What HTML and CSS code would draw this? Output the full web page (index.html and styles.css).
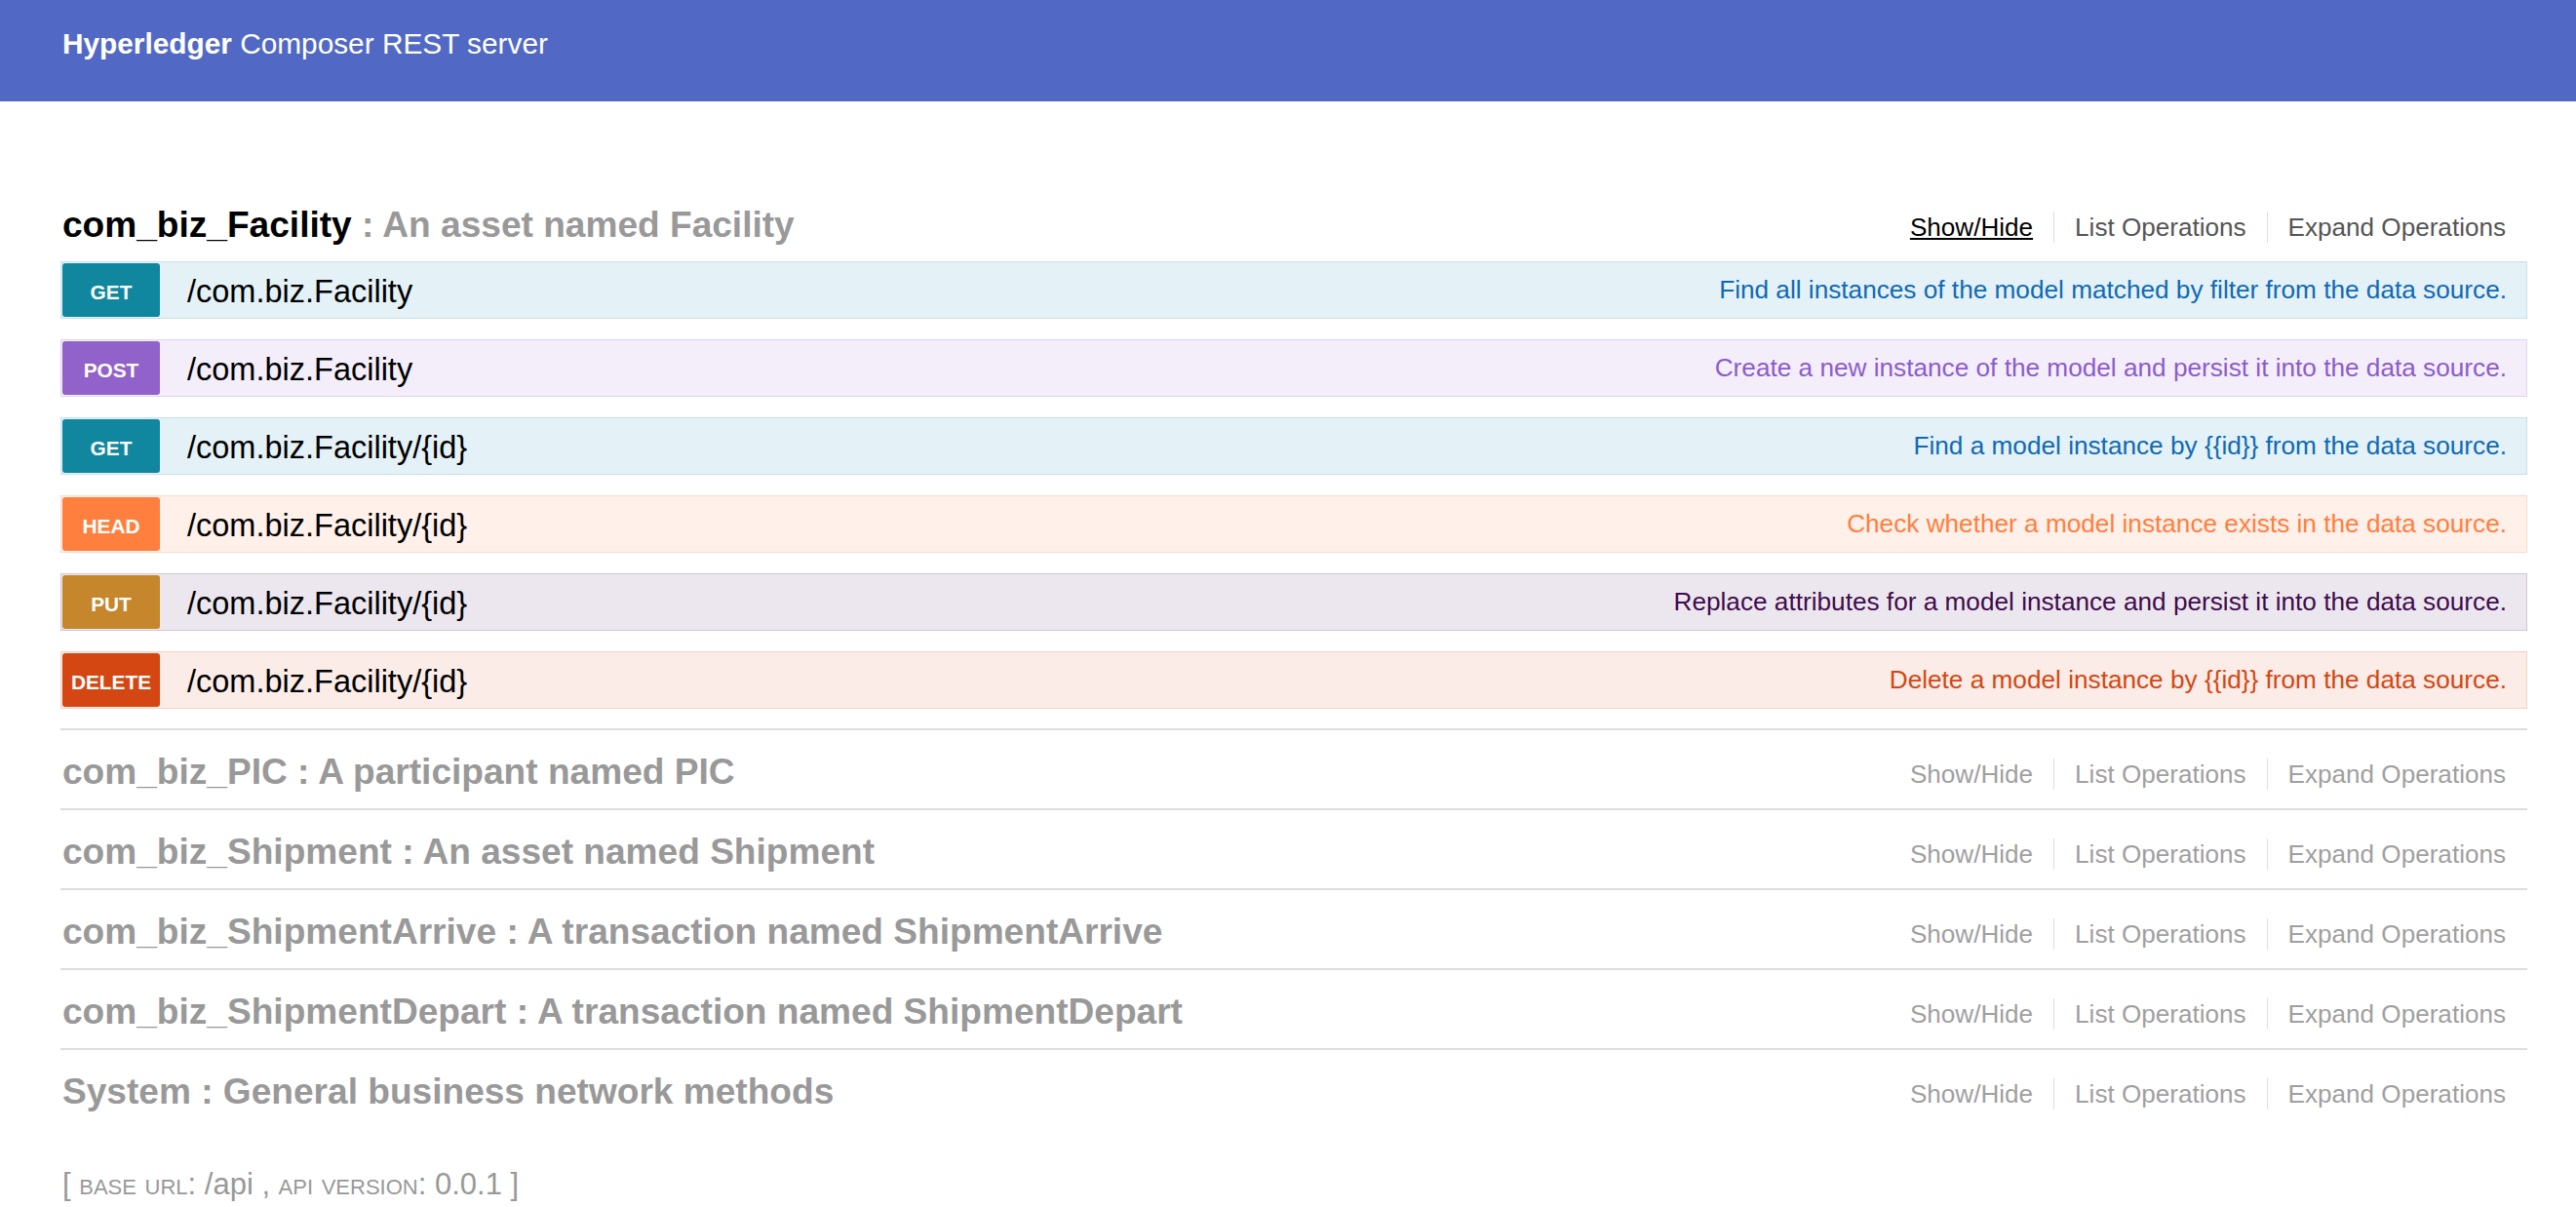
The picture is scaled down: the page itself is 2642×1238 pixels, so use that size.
FILE: index.html
```html
<!DOCTYPE html>
<html lang="en">
<head>
<meta charset="utf-8">
<title>Hyperledger Composer REST server</title>
<link rel="stylesheet" href="styles.css">
</head>
<body>
<header class="topbar">
  <div class="brand"><b>Hyperledger</b> Composer REST server</div>
</header>
<main class="container">
  <section class="resource open">
    <div class="res-head">
      <h2 class="res-title"><span class="res-name">com_biz_Facility</span> : An asset named Facility</h2>
      <ul class="res-links">
        <li><a class="active">Show/Hide</a></li>
        <li><a>List Operations</a></li>
        <li><a>Expand Operations</a></li>
      </ul>
    </div>
    <div class="ops">
      <div class="op get"><span class="method">GET</span><span class="path">/com.biz.Facility</span><span class="desc">Find all instances of the model matched by filter from the data source.</span></div>
      <div class="op post"><span class="method">POST</span><span class="path">/com.biz.Facility</span><span class="desc">Create a new instance of the model and persist it into the data source.</span></div>
      <div class="op get"><span class="method">GET</span><span class="path">/com.biz.Facility/{id}</span><span class="desc">Find a model instance by {{id}} from the data source.</span></div>
      <div class="op head"><span class="method">HEAD</span><span class="path">/com.biz.Facility/{id}</span><span class="desc">Check whether a model instance exists in the data source.</span></div>
      <div class="op put"><span class="method">PUT</span><span class="path">/com.biz.Facility/{id}</span><span class="desc">Replace attributes for a model instance and persist it into the data source.</span></div>
      <div class="op delete"><span class="method">DELETE</span><span class="path">/com.biz.Facility/{id}</span><span class="desc">Delete a model instance by {{id}} from the data source.</span></div>
    </div>
  </section>
  <section class="resource">
    <div class="res-head">
      <h2 class="res-title"><span class="res-name">com_biz_PIC</span> : A participant named PIC</h2>
      <ul class="res-links"><li><a>Show/Hide</a></li><li><a>List Operations</a></li><li><a>Expand Operations</a></li></ul>
    </div>
  </section>
  <section class="resource">
    <div class="res-head">
      <h2 class="res-title"><span class="res-name">com_biz_Shipment</span> : An asset named Shipment</h2>
      <ul class="res-links"><li><a>Show/Hide</a></li><li><a>List Operations</a></li><li><a>Expand Operations</a></li></ul>
    </div>
  </section>
  <section class="resource">
    <div class="res-head">
      <h2 class="res-title"><span class="res-name">com_biz_ShipmentArrive</span> : A transaction named ShipmentArrive</h2>
      <ul class="res-links"><li><a>Show/Hide</a></li><li><a>List Operations</a></li><li><a>Expand Operations</a></li></ul>
    </div>
  </section>
  <section class="resource">
    <div class="res-head">
      <h2 class="res-title"><span class="res-name">com_biz_ShipmentDepart</span> : A transaction named ShipmentDepart</h2>
      <ul class="res-links"><li><a>Show/Hide</a></li><li><a>List Operations</a></li><li><a>Expand Operations</a></li></ul>
    </div>
  </section>
  <section class="resource">
    <div class="res-head">
      <h2 class="res-title"><span class="res-name">System</span> : General business network methods</h2>
      <ul class="res-links"><li><a>Show/Hide</a></li><li><a>List Operations</a></li><li><a>Expand Operations</a></li></ul>
    </div>
  </section>
  <footer class="footer">[ <span class="sc">base url</span>: /api , <span class="sc">api version</span>: 0.0.1 ]</footer>
</main>
</body>
</html>
```
FILE: styles.css
```css
html, body {
  margin: 0;
  padding: 0;
  background: #ffffff;
  font-family: "Liberation Sans", Arial, Helvetica, sans-serif;
}

.topbar {
  box-sizing: border-box;
  height: 104px;
  background: #5169c4;
  padding: 27px 64px 0;
}

.brand {
  color: #ffffff;
  font-size: 29.8px;
  line-height: 36px;
}

.brand b {
  font-weight: bold;
}

.container {
  padding: 84px 50px 0 62px;
}

.resource {
  border-bottom: 2px solid #dddddd;
}

.resource:last-of-type {
  border-bottom: none;
}

.res-head {
  display: flex;
  align-items: center;
  justify-content: space-between;
  height: 80px;
  padding-left: 2px;
}

.res-title {
  margin: 0;
  padding-top: 5px;
  font-size: 37.1px;
  font-weight: bold;
  color: #999999;
  white-space: nowrap;
}

.open .res-name {
  color: #000000;
}

.res-links {
  display: flex;
  list-style: none;
  margin: 0 1px 0 0;
  padding: 10px 0 0 0;
}

.res-links li {
  padding: 0 21px;
  line-height: 32px;
  font-size: 26.1px;
  border-left: 1px solid #dddddd;
}

.res-links li:first-child {
  border-left: none;
}

.res-links a {
  color: #a0a0a0;
}

.open .res-links a {
  color: #555555;
}

.open .res-links a.active {
  color: #000000;
  text-decoration: underline;
}

.ops {
  display: flex;
  flex-direction: column;
  gap: 21px;
  padding-bottom: 20px;
}

.op {
  box-sizing: border-box;
  height: 59px;
  display: flex;
  align-items: center;
  border: 1px solid;
  padding: 1px 20px 1px 1px;
}

.method {
  box-sizing: border-box;
  width: 100px;
  height: 55px;
  flex: none;
  display: flex;
  align-items: center;
  justify-content: center;
  padding-top: 5px;
  border-radius: 3px;
  color: #ffffff;
  font-size: 20.8px;
  font-weight: bold;
}

.path {
  margin-left: 28px;
  padding-top: 4px;
  font-size: 32.5px;
  color: #000000;
}

.desc {
  margin-left: auto;
  font-size: 26.2px;
}

.get { background: #e4f1f6; border-color: #c4e2ea; }
.get .method { background: #10879e; }
.get .desc { color: #0f6ab4; }

.post { background: #f3eefa; border-color: #e0d4f2; }
.post .method { background: #9162c9; }
.post .desc { color: #8d5ccb; }

.head { background: #fff0ea; border-color: #fdd9c9; }
.head .method { background: #ff7f3e; }
.head .desc { color: #ff7f3e; }

.put { background: #ece7ee; border-color: #d3c4d9; }
.put .method { background: #c5862c; }
.put .desc { color: #3f0b4d; }

.delete { background: #fbece7; border-color: #f5d0c3; }
.delete .method { background: #d44712; }
.delete .desc { color: #d44712; }

.footer {
  padding: 36px 0 0 2px;
  line-height: 44px;
  font-size: 31px;
  color: #999999;
}

.sc {
  font-variant: small-caps;
}
```
